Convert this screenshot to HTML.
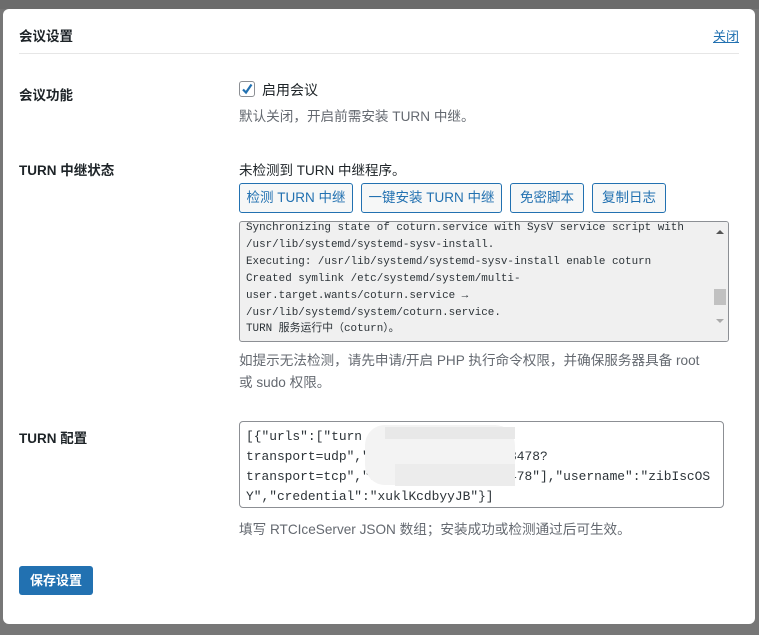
<!DOCTYPE html>
<html><head><meta charset="utf-8"><style>
*{box-sizing:border-box;margin:0;padding:0}
body{width:759px;height:635px;background:#777;position:relative;overflow:hidden;font-family:"Liberation Sans","Noto Sans CJK SC",sans-serif;color:#1d2327;font-size:13.5px}
.a{position:absolute;white-space:nowrap}
.modal{position:absolute;left:3px;top:9px;width:752px;height:615px;background:#fff;border-radius:6px}
.lbl{font-size:13.5px;font-weight:600;color:#1d2327}
.desc{color:#646970;font-size:13.6px}
.btn{position:absolute;top:183px;height:30px;border:1px solid #2271b1;background:#f6f7f7;color:#2271b1;border-radius:3px;font-size:13.5px;line-height:28px;text-align:center}
.mono{font-family:"Liberation Mono","Noto Sans CJK SC",monospace}
</style></head><body>
<div class="a" style="left:0;top:0;width:759px;height:9px;background:#6c6c6c"></div>
<div class="modal"></div>
<div class="a" style="left:19px;top:25px;font-size:13.5px;font-weight:600">会议设置</div>
<div class="a" style="left:713px;top:26px;color:#2271b1;text-decoration:underline;font-size:13px">关闭</div>
<div class="a" style="left:19px;top:53px;width:720px;height:1px;background:#e6e6e6"></div>

<div class="a lbl" style="left:19px;top:84px">会议功能</div>
<div class="a" style="left:239px;top:81px;width:16px;height:16px;border:1px solid #8c8f94;border-radius:3px;background:#fff">
<svg width="14" height="14" viewBox="0 0 14 14" style="position:absolute;left:0;top:0"><path d="M3 7.5 L6 10.5 L11.5 2.5" stroke="#2271b1" stroke-width="2.2" fill="none"/></svg></div>
<div class="a" style="left:262px;top:80px;font-size:14px">启用会议</div>
<div class="a desc" style="left:239px;top:105px">默认关闭，开启前需安装 TURN 中继。</div>

<div class="a lbl" style="left:19px;top:159px">TURN 中继状态</div>
<div class="a" style="left:239px;top:159px">未检测到 TURN 中继程序。</div>
<div class="btn" style="left:239px;width:114px">检测 TURN 中继</div>
<div class="btn" style="left:361px;width:141px">一键安装 TURN 中继</div>
<div class="btn" style="left:510px;width:74px">免密脚本</div>
<div class="btn" style="left:592px;width:74px">复制日志</div>

<div class="a" style="left:239px;top:221px;width:490px;height:121px;background:#f0f0f0;border:1px solid #8c8f94;border-radius:3px;overflow:hidden">
<div class="mono" style="position:absolute;left:6px;top:-2px;font-size:10.9px;line-height:16.9px;color:#2c3338;white-space:pre">Synchronizing state of coturn.service with SysV service script with
/usr/lib/systemd/systemd-sysv-install.
Executing: /usr/lib/systemd/systemd-sysv-install enable coturn
Created symlink /etc/systemd/system/multi-
user.target.wants/coturn.service → 
/usr/lib/systemd/system/coturn.service.
TURN 服务运行中（coturn）。</div>
<div style="position:absolute;right:0;top:0;width:16px;height:121px;background:#f0f0f0"></div>
<div style="position:absolute;right:4px;top:8px;border:4px solid transparent;border-bottom:4px solid #555;border-top:0"></div>
<div style="position:absolute;right:2px;top:67px;width:12px;height:16px;background:#c1c1c1"></div>
<div style="position:absolute;right:4px;top:97px;border:4px solid transparent;border-top:4px solid #aaa;border-bottom:0"></div>
</div>
<div class="a desc" style="left:239px;top:350px;line-height:22px">如提示无法检测，请先申请/开启 PHP 执行命令权限，并确保服务器具备 root<br>或 sudo 权限。</div>

<div class="a lbl" style="left:19px;top:427px">TURN 配置</div>
<div class="a" style="left:239px;top:421px;width:485px;height:87px;background:#fff;border:1px solid #8c8f94;border-radius:4px;overflow:hidden">
<div class="mono" style="position:absolute;left:6px;top:5px;font-size:12.9px;line-height:20px;color:#2c3338;white-space:pre">[{"urls":["turn
transport=udp","t                 3478?
transport=tcp","stu               478"],"username":"zibIscOS
Y","credential":"xuklKcdbyyJB"}]</div>
<div style="position:absolute;left:125px;top:3px;width:150px;height:60px;background:#f3f3f3;border-radius:20px"></div>
<div style="position:absolute;left:145px;top:5px;width:130px;height:12px;background:#e8e8e8"></div>
<div style="position:absolute;left:155px;top:42px;width:120px;height:22px;background:#ececec"></div>
</div>
<div class="a desc" style="left:239px;top:518px">填写 RTCIceServer JSON 数组；安装成功或检测通过后可生效。</div>

<div class="a" style="left:19px;top:566px;width:74px;height:29px;background:#2271b1;border-radius:3px;color:#fff;font-weight:600;font-size:13px;line-height:29px;text-align:center">保存设置</div>
</body></html>
